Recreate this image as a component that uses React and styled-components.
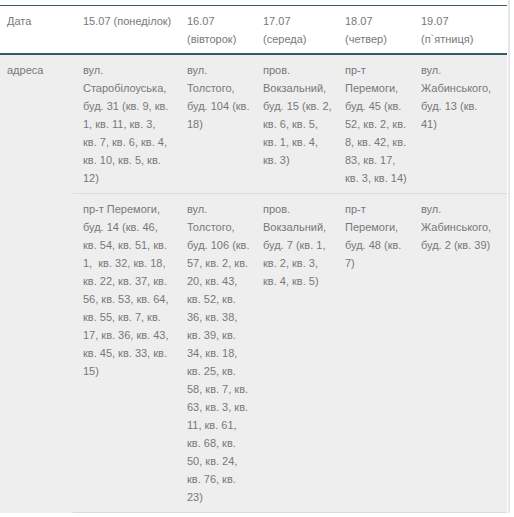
import React from "react";
import styled, { createGlobalStyle } from "styled-components";

const GlobalStyle = createGlobalStyle`
  body {
    margin: 0;
    background: #ffffff;
  }
`;

const Page = styled.div`
  padding-top: 5px;
  width: 510px;
  border-right: 2px solid #e6e6e6;
  box-sizing: border-box;
`;

const Schedule = styled.table`
  width: 507px;
  table-layout: fixed;
  border-collapse: collapse;
  font-family: "Liberation Sans", Arial, sans-serif;
  font-size: 11px;
  line-height: 18px;
  color: #787878;
`;

const Col = styled.col`
  width: ${(p) => p.$w}px;
`;

const Head = styled.thead`
  background: #ffffff;
  border-top: 1px solid #365b68;
  border-bottom: 2px solid #365b68;
`;

const HeadCell = styled.th`
  font-weight: normal;
  text-align: left;
  vertical-align: top;
  padding: 6px ${(p) => p.$pr}px 5px 10px;

  &:first-child {
    padding-left: 7px;
  }
`;

const Body = styled.tbody`
  background: #eeeeee;
`;

const Row = styled.tr`
  & + & > td {
    border-top: 1px solid #dcdcdc;
  }

  &:last-child > td {
    border-bottom: 1px solid #dcdcdc;
  }
`;

const Cell = styled.td`
  vertical-align: top;
  padding: 6px ${(p) => p.$pr}px 6px 10px;
`;

const LabelCell = styled(Cell)`
  padding-left: 7px;
  border-bottom: none !important;
`;

// w: column width, pr: right padding of body cells, hpr: right padding of header cell
const columns = [
  { w: 73, pr: 2, hpr: 2, title: "Дата" },
  { w: 104, pr: 8, hpr: 2, title: "15.07 (понеділок)" },
  { w: 76, pr: 2, hpr: 2, title: "16.07 (вівторок)" },
  { w: 82, pr: 2, hpr: 2, title: "17.07 (середа)" },
  { w: 76, pr: 2, hpr: 2, title: "18.07 (четвер)" },
  { w: 96, pr: 13, hpr: 13, title: "19.07 (п`ятниця)" },
];

const rows = [
  [
    "вул. Старобілоуська, буд. 31 (кв. 9, кв. 1, кв. 11, кв. 3, кв. 7, кв. 6, кв. 4, кв. 10, кв. 5, кв. 12)",
    "вул. Толстого, буд. 104 (кв. 18)",
    "пров. Вокзальний, буд. 15 (кв. 2, кв. 6, кв. 5, кв. 1, кв. 4, кв. 3)",
    "пр-т Перемоги, буд. 45 (кв. 52, кв. 2, кв. 8, кв. 42, кв. 83, кв. 17, кв. 3, кв. 14)",
    "вул. Жабинського, буд. 13 (кв. 41)",
  ],
  [
    "пр-т Перемоги, буд. 14 (кв. 46, кв. 54, кв. 51, кв. 1,\u00a0 кв. 32, кв. 18, кв. 22, кв. 37, кв. 56, кв. 53, кв. 64, кв. 55, кв. 7, кв. 17, кв. 36, кв. 43, кв. 45, кв. 33, кв. 15)",
    "вул. Толстого, буд. 106 (кв. 57, кв. 2, кв. 20, кв. 43, кв. 52, кв. 36, кв. 38, кв. 39, кв. 34, кв. 18, кв. 25, кв. 58, кв. 7, кв. 63, кв. 3, кв. 11, кв. 61, кв. 68, кв. 50, кв. 24, кв. 76, кв. 23)",
    "пров. Вокзальний, буд. 7 (кв. 1, кв. 2, кв. 3, кв. 4, кв. 5)",
    "пр-т Перемоги, буд. 48 (кв. 7)",
    "вул. Жабинського, буд. 2 (кв. 39)",
  ],
];

const App = () => {
  return (
    <>
      <GlobalStyle />
      <Page>
        <Schedule>
          <colgroup>
            {columns.map((c) => (
              <Col key={c.title} $w={c.w} />
            ))}
          </colgroup>
          <Head>
            <tr>
              {columns.map((c) => (
                <HeadCell key={c.title} $pr={c.hpr}>
                  {c.title}
                </HeadCell>
              ))}
            </tr>
          </Head>
          <Body>
            {rows.map((cells, i) => (
              <Row key={i}>
                {i === 0 && (
                  <LabelCell rowSpan={rows.length} $pr={2}>
                    адреса
                  </LabelCell>
                )}
                {cells.map((text, j) => (
                  <Cell key={j} $pr={columns[j + 1].pr}>
                    {text}
                  </Cell>
                ))}
              </Row>
            ))}
          </Body>
        </Schedule>
      </Page>
    </>
  );
};

export default App;
